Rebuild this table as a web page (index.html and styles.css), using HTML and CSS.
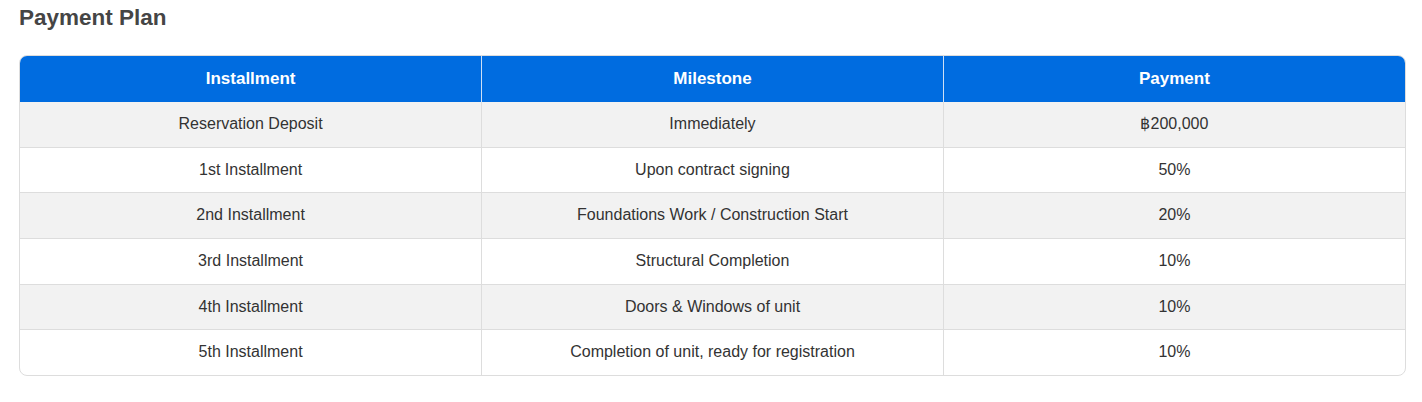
FILE: index.html
```html
<!DOCTYPE html>
<html>
<head>
<meta charset="utf-8">
<link rel="stylesheet" href="styles.css">
</head>
<body>
<section class="plan">
  <h2 class="plan-title">Payment Plan</h2>
  <div class="table-wrap">
    <table class="plan-table">
      <thead>
        <tr><th>Installment</th><th>Milestone</th><th>Payment</th></tr>
      </thead>
      <tbody>
        <tr><td>Reservation Deposit</td><td>Immediately</td><td>฿200,000</td></tr>
        <tr><td>1st Installment</td><td>Upon contract signing</td><td>50%</td></tr>
        <tr><td>2nd Installment</td><td>Foundations Work / Construction Start</td><td>20%</td></tr>
        <tr><td>3rd Installment</td><td>Structural Completion</td><td>10%</td></tr>
        <tr><td>4th Installment</td><td>Doors &amp; Windows of unit</td><td>10%</td></tr>
        <tr><td>5th Installment</td><td>Completion of unit, ready for registration</td><td>10%</td></tr>
      </tbody>
    </table>
  </div>
</section>
</body>
</html>
```
FILE: styles.css
```css
html, body { margin: 0; padding: 0; background: #fff; }
body { font-family: "Liberation Sans", Arial, sans-serif; color: #333; }
.plan { padding: 5px 16px 0 19px; }
.plan-title {
  margin: 0 0 24px 0;
  font-size: 22.5px;
  line-height: 26px;
  font-weight: bold;
  color: #454545;
}
.table-wrap {
  border: 1px solid #ddd;
  border-radius: 8px;
  overflow: hidden;
}
.plan-table {
  width: 100%;
  border-collapse: collapse;
  table-layout: fixed;
}
.plan-table th {
  background: #006ce0;
  color: #fff;
  font-weight: bold;
  font-size: 17px;
  line-height: 22px;
  padding: 12px;
  border-left: 1px solid #cfe0f5;
}
.plan-table td {
  font-size: 16px;
  line-height: 20.67px;
  padding: 12px;
  text-align: center;
  border-left: 1px solid #ddd;
  border-top: 1px solid #ddd;
}
.plan-table th:first-child, .plan-table td:first-child { border-left: none; }
.plan-table tbody tr:first-child td { border-top: none; }
.plan-table tbody tr:nth-child(odd) td { background: #f2f2f2; }
```
